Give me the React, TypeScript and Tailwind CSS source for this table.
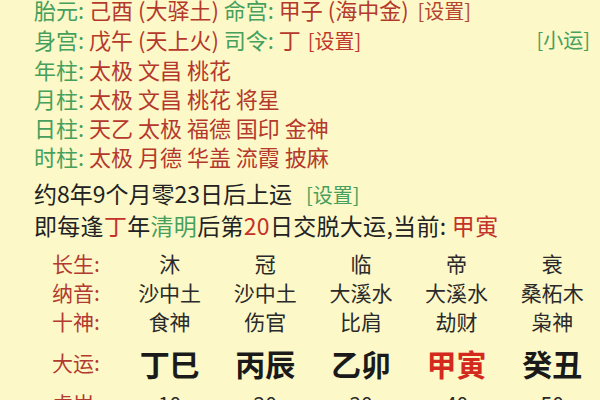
const FONT = { fontFamily: '"Noto Sans CJK SC", "Noto Sans", sans-serif' };

const G = ({ children }: { children: React.ReactNode }) => (
  <span className="text-[#45a05c]">{children}</span>
);
const R = ({ children }: { children: React.ReactNode }) => (
  <span className="text-[#b5382d]">{children}</span>
);

const infoRows: { label: string; value: React.ReactNode }[] = [
  { label: '年柱', value: '太极 文昌 桃花' },
  { label: '月柱', value: '太极 文昌 桃花 将星' },
  { label: '日柱', value: '天乙 太极 福德 国印 金神' },
  { label: '时柱', value: '太极 月德 华盖 流霞 披麻' },
];

const tableRows = [
  { label: '长生', cells: ['沐', '冠', '临', '帝', '衰'], h: 'h-[28px]' },
  { label: '纳音', cells: ['沙中土', '沙中土', '大溪水', '大溪水', '桑柘木'], h: 'h-[29px]' },
  { label: '十神', cells: ['食神', '伤官', '比肩', '劫财', '枭神'], h: 'h-[30px]' },
];

const dayun = ['丁巳', '丙辰', '乙卯', '甲寅', '癸丑'];
const ages = ['10', '20', '30', '40', '50'];

export default function App() {
  return (
    <div
      className="h-[400px] w-[600px] overflow-hidden bg-[#fcf8c8] text-[#222]"
      style={FONT}
    >
      {/* 命盘信息 */}
      <div className="-mt-[5px] pl-[34px] text-[22px] leading-[29px] whitespace-nowrap">
        <div>
          <G>胎元: </G>
          <R>己酉 (大驿土) </R>
          <G>命宫: </G>
          <R>甲子 (海中金) </R>
          <span className="ml-[4px] text-[20px] text-[#b5452f]">[设置]</span>
        </div>
        <div className="flex">
          <div>
            <G>身宫: </G>
            <R>戊午 (天上火) </R>
            <G>司令: </G>
            <R>丁 </R>
            <span className="ml-[2px] text-[20px] text-[#c0392b]">[设置]</span>
          </div>
          <span className="ml-auto mr-[10px] text-[20px] text-[#45a05c]">[小运]</span>
        </div>
        {infoRows.map((row) => (
          <div key={row.label}>
            <G>{row.label}: </G>
            <R>{row.value}</R>
          </div>
        ))}
        <div className="mt-[6px] h-[32px] text-[23px] leading-[32px]">
          <span>约8年9个月零23日后上运</span>
          <span className="ml-[14px] text-[20px] text-[#45a05c]">[设置]</span>
        </div>
        <div className="text-[23px] leading-[32px] tracking-[0.3px]">
          即每逢<span className="text-[#c4322a]">丁</span>年
          <span className="text-[#45a05c]">清明</span>后第
          <span className="text-[#c4322a]">20</span>日交脱大运,当前:{' '}
          <span className="text-[#c4322a]">甲寅</span>
        </div>
      </div>

      {/* 大运表 */}
      <div className="mt-[9px] pl-[52px] text-[21px]">
        {tableRows.map((row) => (
          <div key={row.label} className={`flex items-center ${row.h}`}>
            <div className="w-[73px] text-[#b23a30]">{row.label}:</div>
            {row.cells.map((c, i) => (
              <div key={i} className="w-[100px] text-center text-[#2a2a2a]">
                {c}
              </div>
            ))}
          </div>
        ))}
        <div className="flex h-[52px] items-center">
          <div className="w-[73px] text-[#b23a30]">大运:</div>
          {dayun.map((c) => (
            <div
              key={c}
              className={`w-[100px] text-center text-[30px] font-bold ${
                c === '甲寅' ? 'text-[#d42a1e]' : 'text-[#1a1a1a]'
              }`}
            >
              {c}
            </div>
          ))}
        </div>
        <div className="flex h-[30px] items-center">
          <div className="w-[73px] text-[#b23a30]">虚岁:</div>
          {ages.map((a) => (
            <div key={a} className="w-[100px] text-center text-[#2a2a2a]">
              {a}
            </div>
          ))}
        </div>
      </div>
    </div>
  );
}
